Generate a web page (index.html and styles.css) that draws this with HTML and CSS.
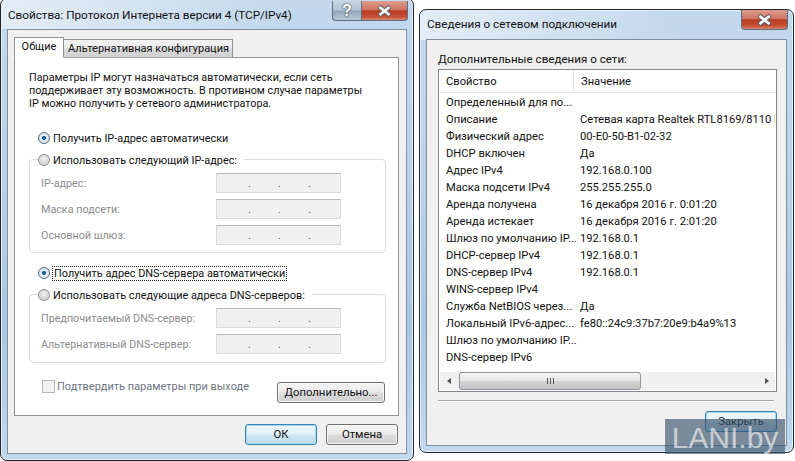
FILE: index.html
```html
<!DOCTYPE html>
<html lang="ru">
<head>
<meta charset="utf-8">
<title>Свойства</title>
<link rel="stylesheet" href="styles.css">
</head>
<body>
<main class="desktop">
  <section class="win win-props">
    <header class="titlebar">
      <span class="title">Свойства: Протокол Интернета версии 4 (TCP/IPv4)</span>
      <div class="caption">
        <span class="cap cap-help">?</span>
        <span class="cap cap-close"><svg width="17" height="12" viewBox="0 0 17 12"><path d="M3 1.5L14 10.5M14 1.5L3 10.5" stroke="#5a5f68" stroke-width="4.6" fill="none"/><path d="M3.5 2L13.5 10M13.5 2L3.5 10" stroke="#fff" stroke-width="2.6" fill="none"/></svg></span>
      </div>
    </header>
    <div class="panel panel-props">
      <div class="tabs">
        <span class="tab tab-active">Общие</span>
        <span class="tab">Альтернативная конфигурация</span>
      </div>
      <div class="tabbody">
        <p class="intro">Параметры IP могут назначаться автоматически, если сеть<br>поддерживает эту возможность. В противном случае параметры<br>IP можно получить у сетевого администратора.</p>
        <label class="option option-first"><span class="radio radio-on"></span><span>Получить IP-адрес автоматически</span></label>
        <fieldset class="group group-ip">
          <label class="option legend"><span class="radio"></span><span class="legend-text">Использовать следующий IP-адрес:</span></label>
          <div class="field"><span class="flabel">IP-адрес:</span><span class="ipbox"><i>.</i><i>.</i><i>.</i></span></div>
          <div class="field"><span class="flabel">Маска подсети:</span><span class="ipbox"><i>.</i><i>.</i><i>.</i></span></div>
          <div class="field"><span class="flabel">Основной шлюз:</span><span class="ipbox"><i>.</i><i>.</i><i>.</i></span></div>
        </fieldset>
        <label class="option option-dns"><span class="radio radio-on"></span><span class="focus">Получить адрес DNS-сервера автоматически</span></label>
        <fieldset class="group group-dns">
          <label class="option legend"><span class="radio"></span><span class="legend-text">Использовать следующие адреса DNS-серверов:</span></label>
          <div class="field"><span class="flabel">Предпочитаемый DNS-сервер:</span><span class="ipbox"><i>.</i><i>.</i><i>.</i></span></div>
          <div class="field"><span class="flabel">Альтернативный DNS-сервер:</span><span class="ipbox"><i>.</i><i>.</i><i>.</i></span></div>
        </fieldset>
        <div class="confirm">
          <label class="check"><span class="checkbox"></span><span>Подтвердить параметры при выходе</span></label>
          <button class="btn btn-adv">Дополнительно...</button>
        </div>
      </div>
      <div class="actions">
        <button class="btn btn-default">ОК</button>
        <button class="btn">Отмена</button>
      </div>
    </div>
  </section>

  <section class="win win-info">
    <header class="titlebar">
      <span class="title">Сведения о сетевом подключении</span>
      <div class="caption">
        <span class="cap cap-close"><svg width="17" height="12" viewBox="0 0 17 12"><path d="M3 1.5L14 10.5M14 1.5L3 10.5" stroke="#5a5f68" stroke-width="4.6" fill="none"/><path d="M3.5 2L13.5 10M13.5 2L3.5 10" stroke="#fff" stroke-width="2.6" fill="none"/></svg></span>
      </div>
    </header>
    <div class="panel panel-info">
      <div class="caption-line">Дополнительные сведения о сети:</div>
      <div class="list">
        <div class="list-head"><span class="col col-a">Свойство</span><span class="col col-b">Значение</span></div>
        <div class="rows">
          <div class="row"><span class="col-a">Определенный для по...</span><span class="col-b"></span></div>
          <div class="row"><span class="col-a">Описание</span><span class="col-b">Сетевая карта Realtek RTL8169/8110 Family</span></div>
          <div class="row"><span class="col-a">Физический адрес</span><span class="col-b">00-E0-50-B1-02-32</span></div>
          <div class="row"><span class="col-a">DHCP включен</span><span class="col-b">Да</span></div>
          <div class="row"><span class="col-a">Адрес IPv4</span><span class="col-b">192.168.0.100</span></div>
          <div class="row"><span class="col-a">Маска подсети IPv4</span><span class="col-b">255.255.255.0</span></div>
          <div class="row"><span class="col-a">Аренда получена</span><span class="col-b">16 декабря 2016 г. 0:01:20</span></div>
          <div class="row"><span class="col-a">Аренда истекает</span><span class="col-b">16 декабря 2016 г. 2:01:20</span></div>
          <div class="row"><span class="col-a">Шлюз по умолчанию IP...</span><span class="col-b">192.168.0.1</span></div>
          <div class="row"><span class="col-a">DHCP-сервер IPv4</span><span class="col-b">192.168.0.1</span></div>
          <div class="row"><span class="col-a">DNS-сервер IPv4</span><span class="col-b">192.168.0.1</span></div>
          <div class="row"><span class="col-a">WINS-сервер IPv4</span><span class="col-b"></span></div>
          <div class="row"><span class="col-a">Служба NetBIOS через...</span><span class="col-b">Да</span></div>
          <div class="row"><span class="col-a">Локальный IPv6-адрес...</span><span class="col-b">fe80::24c9:37b7:20e9:b4a9%13</span></div>
          <div class="row"><span class="col-a">Шлюз по умолчанию IP...</span><span class="col-b"></span></div>
          <div class="row"><span class="col-a">DNS-сервер IPv6</span><span class="col-b"></span></div>
        </div>
        <div class="hbar">
          <span class="arrow arrow-left"></span>
          <div class="track"><div class="thumb"><span class="grip"></span></div></div>
          <span class="arrow arrow-right"></span>
        </div>
      </div>
      <hr class="rule">
      <div class="actions-info"><button class="btn btn-default">Закрыть</button></div>
    </div>
  </section>

  <div class="watermark">LANI.by</div>
</main>
</body>
</html>
```
FILE: styles.css
```css
* { box-sizing: border-box; }
html, body { margin: 0; padding: 0; background: #fff; }
body { font: 11.2px/13px Roboto, "Liberation Sans", sans-serif; color: #111; }
.desktop { position: relative; width: 795px; height: 461px; overflow: hidden; background: #fff; }

.win {
  position: absolute;
  border: 1px solid #23262a;
  border-radius: 7px;
  box-shadow: inset 0 0 0 1px #e6f0f9;
  background:
    linear-gradient(90deg, rgba(255,255,255,.55) 0, rgba(255,255,255,0) 70%) 0 0 / 100% 30px no-repeat,
    linear-gradient(180deg, #c3d8ed 0, #b9d1e9 40%, #a9c6e2 70%, #c1d8ee 100%);
  padding: 0 6px 6px;
  display: flex;
  flex-direction: column;
}
.win-props { left: 0; top: -2px; width: 414px; height: 463px; }
.win-info { left: 419px; top: 9px; width: 375px; height: 444px; }

.titlebar { height: 29px; display: flex; justify-content: space-between; flex: none; }
.win-props .titlebar { height: 30px; }
.title { font-size: 11.7px; line-height: 16px; padding: 8px 0 0 1px; color: #101010; }
.win-info .title { padding-top: 6px; }
.caption { display: flex; align-items: flex-start; margin-right: -1px; }
.cap {
  height: 20px;
  display: flex; align-items: center; justify-content: center;
  border: 1px solid #5f6f80; border-top: 0;
  font: bold 16px/18px "Liberation Sans", sans-serif;
}
.cap-help {
  width: 29px; margin-top: 2px; border-right: 0; border-radius: 0 0 0 4px;
  color: #fff; text-shadow: 0 0 2px #444, 0 0 1px #333;
  background: linear-gradient(180deg, #c6d5e3 0, #b1c4d6 48%, #8fa5b8 52%, #b9cad8 100%);
}
.cap-close {
  width: 47px; margin-top: 2px; border-radius: 0 0 4px 0;
  background: linear-gradient(180deg, #dd9d8e 0, #cf7562 45%, #b93a22 52%, #c9523a 85%, #d98a70 100%);
}
.win-info .cap-close { margin-top: 0; border-radius: 0 0 4px 4px; }

.panel { flex: 1; background: #f0f0f0; border: 1px solid #7d8fa1; display: flex; flex-direction: column; min-height: 0; }
.panel-props { padding: 7px 7px 0 6px; }
.panel-info { padding: 12px 9px 0 11px; }

.tabs { display: flex; align-items: flex-end; height: 21px; flex: none; position: relative; z-index: 1; margin-bottom: -1px; }
.tab {
  height: 19px; padding: 0 4px; line-height: 18px; border: 1px solid #8e9398; border-bottom: 1px solid #a0a0a0; border-left: 0;
  background: linear-gradient(180deg, #f2f2f2 0, #ebebeb 45%, #dddddd 50%, #cfcfcf 100%);
  width: 169px; text-align: center; white-space: nowrap; font-size: 11px;
}
.tab-active {
  width: 50px; height: 21px; line-height: 18px; background: #fff; border: 1px solid #8e9398; border-bottom: 1px solid #fff; padding: 0;
}
.tabbody { height: 359px; background: #fff; border: 1px solid #8e9398; padding: 13px 12px 0 14px; flex: none; font-size: 10.9px; }
.intro { margin: 0; height: 60px; line-height: 13px; white-space: nowrap; font-size: 10.8px; }

.option { display: flex; align-items: center; gap: 3px; height: 14px; white-space: nowrap; }
.option-first { margin: 0 0 0 9px; height: 14px; }
.option-dns { margin: 0 0 0 9px; }
.radio {
  width: 12px; height: 12px; border-radius: 50%; flex: none;
  border: 1px solid #8a8a8a;
  background: radial-gradient(circle at 50% 40%, #f4f4f4, #c8c8c8 75%);
  box-shadow: inset 0 0 0 1px #e8e8e8;
}
.radio-on {
  border-color: #4a6b85;
  background: radial-gradient(circle, #1c76b4 0, #13588e 26%, #e8eef3 32%, #cfd8e0 100%);
}
.group { margin: 0; padding: 0; min-width: 0; border: 1px solid #d5dfe5; border-radius: 4px; width: 357px; background: #fff; }
.group-ip { height: 94px; margin-top: 14px; margin-bottom: 13px; }
.group-dns { height: 69px; margin-top: 14px; }
.legend { margin: -7px 0 0 8px; width: max-content; background: #fff; padding-right: 7px; }
.field { display: flex; align-items: center; justify-content: space-between; height: 20px; margin: 6px 44px 0 11px; color: #8c8c8c; white-space: nowrap; font-size: 10.75px; }
.legend + .field { margin-top: 6px; }
.flabel { display: block; }
.ipbox {
  width: 125px; height: 20px; background: #f0f0f0; border: 1px solid #d9d9d9; border-top-color: #b8b8b8;
  display: flex; padding-left: 31px; gap: 29px; color: #555; line-height: 20px; flex: none;
}
.ipbox i { font-style: normal; width: 1px; }
.focus { outline: 1px dotted #222; outline-offset: 0; padding: 0 1px; }

.confirm { display: flex; justify-content: space-between; align-items: flex-start; margin: 14px 0 0 13px; width: 343px; }
.check { display: flex; align-items: center; gap: 2px; color: #6d7480; height: 16px; white-space: nowrap; margin-top: 1px; font-size: 11px; }
.checkbox { width: 13px; height: 13px; background: #f2f2f2; border: 1px solid #b5b5b5; flex: none; }

.btn {
  width: 72px; height: 21px; padding: 0;
  font: 11.3px/19px Roboto, "Liberation Sans", sans-serif; color: #111;
  border: 1px solid #707070; border-radius: 3px;
  background: linear-gradient(180deg, #f4f4f4 0, #ececec 48%, #dcdcdc 52%, #cfcfcf 100%);
  box-shadow: inset 0 0 0 1px #f8f8f8;
}
.btn-adv { width: 108px; margin-top: 5px; }
.btn-default { border-color: #3c7fb1; box-shadow: inset 0 0 0 1px #9fdcf3; background: linear-gradient(180deg, #eaf6fd 0, #e3f1f9 48%, #d2e8f4 52%, #bdd9e9 100%); }
.actions { display: flex; justify-content: flex-end; gap: 9px; padding: 8px 1px 0 0; }

.caption-line { height: 17px; line-height: 14px; white-space: nowrap; font-size: 11.6px; }
.list { height: 323px; border: 1px solid #828790; background: #fff; display: flex; flex-direction: column; overflow: hidden; flex: none; }
.list-head { display: flex; height: 23px; flex: none; border-bottom: 1px solid #e5e5e5; line-height: 24px; margin: 0 1px; }
.col-a { width: 134px; padding-left: 6px; flex: none; white-space: nowrap; }
.col-b { padding-left: 6px; white-space: nowrap; }
.list-head .col-b { padding-left: 7px; }
.list-head .col-a { border-right: 1px solid #e5e5e5; }
.rows { flex: 1; padding-top: 1px; margin: 0 1px; overflow: hidden; min-height: 0; }
.row { display: flex; height: 17px; line-height: 17px; }
.hbar { height: 18px; flex: none; background: #f0f0f0; display: flex; align-items: stretch; margin: 0 1px 1px; }
.arrow { width: 17px; flex: none; display: flex; justify-content: center; align-items: center; }
.arrow::before { content: ""; border: 3.5px solid transparent; }
.arrow-left::before { border-left-width: 0; border-right: 4px solid #555; }
.arrow-right::before { border-right-width: 0; border-left: 4px solid #555; }
.track { flex: 1; display: flex; padding-left: 2px; }
.thumb {
  width: 182px; border: 1px solid #8f959b; border-radius: 3px;
  background: linear-gradient(180deg, #f3f3f3 0, #e6e6e6 50%, #d2d2d2 52%, #c4c4c4 100%);
  display: flex; align-items: center; justify-content: center;
}
.grip { width: 7px; height: 6px; background: repeating-linear-gradient(90deg, #555 0, #555 1px, transparent 1px, transparent 3px); }
.rule { margin: 8px 3px 0 0; border: 0; border-top: 1px solid #a8a8a8; border-bottom: 1px solid #fff; height: 2px; }
.actions-info { display: flex; justify-content: flex-end; padding-top: 9px; }

.watermark {
  position: absolute; left: 665px; top: 419px; width: 120px; height: 35px;
  background: rgba(60, 85, 110, .66); color: rgba(255,255,255,.62);
  font: 30px/38px "Liberation Sans", sans-serif; text-align: center; white-space: nowrap; overflow: hidden;
}
```
